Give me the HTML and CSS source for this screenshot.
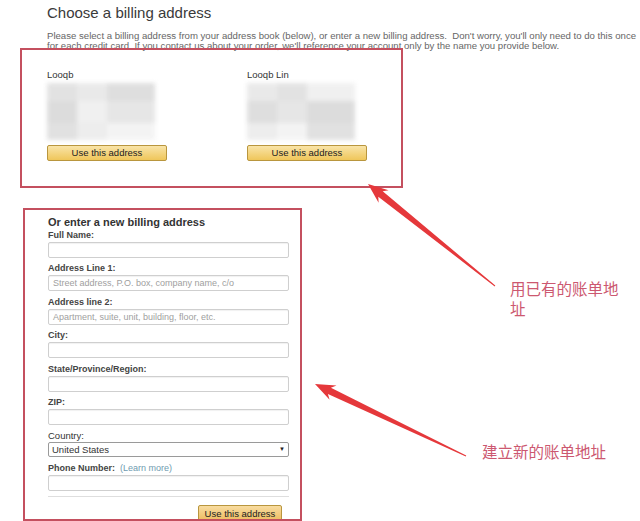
FILE: index.html
```html
<!DOCTYPE html>
<html>
<head>
<meta charset="utf-8">
<link rel="stylesheet" href="styles.css">
</head>
<body>
<div class="page">
  <header class="head">
    <h1 class="title">Choose a billing address</h1>
    <p class="intro">Please select a billing address from your address book (below), or enter a new billing address.&nbsp; Don't worry, you'll only need to do this once<br>for each credit card. If you contact us about your order, we'll reference your account only by the name you provide below.</p>
  </header>

  <section class="book">
    <div class="addr">
      <div class="addr-name">Looqb</div>
      <div class="mosaic">
        <span class="m m1"></span><span class="m m2"></span><span class="m m3"></span>
        <span class="m m4"></span><span class="m m5"></span><span class="m m6"></span>
        <span class="m m7"></span><span class="m m8"></span><span class="m m9"></span>
      </div>
      <button class="btn">Use this address</button>
    </div>
    <div class="addr">
      <div class="addr-name">Looqb Lin</div>
      <div class="mosaic">
        <span class="m m2"></span><span class="m m1"></span><span class="m m5"></span>
        <span class="m m3"></span><span class="m m6"></span><span class="m m4"></span>
        <span class="m m8"></span><span class="m m9"></span><span class="m m7"></span>
      </div>
      <button class="btn">Use this address</button>
    </div>
  </section>

  <section class="newaddr">
    <h2 class="new-title">Or enter a new billing address</h2>
    <div class="field"><div class="label">Full Name:</div><div class="input"></div></div>
    <div class="field"><div class="label">Address Line 1:</div><div class="input ph">Street address, P.O. box, company name, c/o</div></div>
    <div class="field"><div class="label">Address line 2:</div><div class="input ph">Apartment, suite, unit, building, floor, etc.</div></div>
    <div class="field"><div class="label">City:</div><div class="input"></div></div>
    <div class="field"><div class="label">State/Province/Region:</div><div class="input"></div></div>
    <div class="field"><div class="label">ZIP:</div><div class="input"></div></div>
    <div class="field"><div class="label light">Country:</div><div class="select"><span>United States</span><span class="caret">▼</span></div></div>
    <div class="field"><div class="label">Phone Number:&nbsp; <span class="learn">(Learn more)</span></div><div class="input"></div></div>
    <div class="sep"></div>
    <div class="submit-row"><button class="btn btn-small">Use this address</button></div>
  </section>
  <div class="bottom-bar"></div>

  <svg class="arrows" width="640" height="521" viewBox="0 0 640 521">
    <defs>
      <filter id="soft" x="-10%" y="-10%" width="120%" height="120%">
        <feGaussianBlur stdDeviation="0.6"/>
      </filter>
    </defs>
    <polygon filter="url(#soft)" fill="#e5383b" points="368,180 388.6,186.2 382.7,187.3 495.3,281.6 494.7,282.4 378.3,192.7 378.6,198.7"/>
    <polygon filter="url(#soft)" fill="#e5383b" points="315,380 336.5,381.4 330.9,383.7 466.2,451.55 465.8,452.45 327.9,390.1 329.6,395.8"/>
  </svg>
  <div class="note note1">用已有的账单地址</div>
  <div class="note note2">建立新的账单地址</div>
</div>
</body>
</html>
```

FILE: styles.css
```css
html, body {
  margin: 0;
  padding: 0;
  background: #fff;
}
body {
  width: 640px;
  height: 521px;
  overflow: hidden;
  font-family: "Liberation Sans", Arial, sans-serif;
  color: #333;
}
.page {
  position: relative;
  width: 640px;
  height: 521px;
}
.head {
  padding-left: 47px;
}
.title {
  margin: 4px 0 0;
  font-size: 15px;
  line-height: 18px;
  font-weight: normal;
  color: #3a3a3a;
}
.intro {
  margin: 9px 0 0;
  font-size: 9.6px;
  line-height: 10px;
  color: #666;
  white-space: nowrap;
}
.book {
  margin: -3px 0 0 20px;
  width: 379px;
  height: 136px;
  border: 2px solid #c4505f;
  display: flex;
  box-sizing: content-box;
  position: relative;
  z-index: 1;
}
.addr {
  flex: none;
  margin-left: 25px;
  width: 175px;
  padding-top: 20px;
  display: flex;
  flex-direction: column;
  align-items: flex-start;
}
.addr-name {
  font-size: 9.5px;
  line-height: 10px;
  color: #333;
}
.mosaic {
  margin-top: 3px;
  width: 108px;
  height: 57px;
  display: grid;
  grid-template-columns: 30px 30px 48px;
  grid-template-rows: 18px 22px 17px;
  filter: blur(2px);
  opacity: 0.85;
}
.m { display: block; }
.m1 { background: #dedede; }
.m2 { background: #e6e6e6; }
.m3 { background: #d9d9d9; }
.m4 { background: #d7d7d7; }
.m5 { background: #eeeeee; }
.m6 { background: #e2e2e2; }
.m7 { background: #dcdcdc; }
.m8 { background: #eaeaea; }
.m9 { background: #f2f2f2; }
.btn {
  margin-top: 5px;
  width: 120px;
  height: 16px;
  padding: 0;
  border: 1px solid #b9963e;
  border-radius: 2px;
  background: linear-gradient(#f9e4a8, #efc65a);
  font-family: "Liberation Sans", Arial, sans-serif;
  font-size: 9.5px;
  line-height: 14px;
  color: #222;
  text-align: center;
}
.newaddr {
  margin: 20px 0 0 23px;
  height: 303px;
  border: 2px solid #c4505f;
  padding: 6px 0 0 23px;
  box-sizing: content-box;
  width: 252px;
  overflow: hidden;
}
.new-title {
  margin: 0 0 2px;
  font-size: 11px;
  line-height: 12px;
  font-weight: bold;
  color: #333;
}
.field {
  width: 241px;
  margin-bottom: 5.4px;
}
.label {
  font-size: 9px;
  line-height: 11px;
  font-weight: bold;
  color: #444;
  margin-bottom: 1px;
  white-space: nowrap;
}
.label.light {
  font-weight: normal;
  color: #333;
  font-size: 9.5px;
}
.learn {
  font-weight: normal;
  color: #6f9bb0;
}
.input {
  height: 14px;
  border: 1px solid #cfcfcf;
  border-radius: 2px;
  box-shadow: inset 0 1px 1px rgba(0,0,0,0.06);
  font-size: 9px;
  line-height: 14px;
  padding-left: 4px;
  color: #a0a0a0;
}
.select {
  height: 13px;
  border: 1px solid #9a9a9a;
  border-radius: 2px;
  font-size: 9.5px;
  line-height: 13px;
  padding: 0 3px;
  color: #333;
  display: flex;
  justify-content: space-between;
  background: #fff;
}
.caret {
  font-size: 6px;
  color: #222;
}
.sep {
  width: 241px;
  height: 1px;
  background: #dedede;
  margin-top: 3px;
}
.submit-row {
  width: 234px;
  display: flex;
  justify-content: flex-end;
  margin-top: 8px;
}
.btn-small {
  margin-top: 0;
  width: 84px;
  height: 16px;
  line-height: 13px;
  background: linear-gradient(#f8dca0, #eebd62);
  font-size: 9.5px;
}
.bottom-bar {
  height: 2px;
  background: #555;
}
.arrows {
  position: absolute;
  left: 0;
  top: 0;
  z-index: 2;
  pointer-events: none;
}
.note {
  position: absolute;
  z-index: 3;
  font-family: "Noto Sans CJK SC", sans-serif;
  font-size: 15.5px;
  line-height: 20px;
  color: #cc5870;
}
.note1 {
  left: 510px;
  top: 274px;
  width: 116px;
}
.note2 {
  left: 482px;
  top: 437px;
  white-space: nowrap;
}
```
